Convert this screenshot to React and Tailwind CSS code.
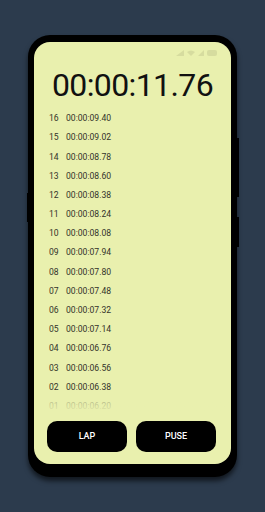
import React from 'react';

const laps = [
  ['16', '00:00:09.40'],
  ['15', '00:00:09.02'],
  ['14', '00:00:08.78'],
  ['13', '00:00:08.60'],
  ['12', '00:00:08.38'],
  ['11', '00:00:08.24'],
  ['10', '00:00:08.08'],
  ['09', '00:00:07.94'],
  ['08', '00:00:07.80'],
  ['07', '00:00:07.48'],
  ['06', '00:00:07.32'],
  ['05', '00:00:07.14'],
  ['04', '00:00:06.76'],
  ['03', '00:00:06.56'],
  ['02', '00:00:06.38'],
  ['01', '00:00:06.20'],
];

// status icons, very faint like in the shot
const StatusIcons = () => (
  <div className="flex items-center gap-[3px] opacity-40">
    <svg width="8" height="6" viewBox="0 0 8 6">
      <path d="M0 6 L8 0 L8 6 Z" fill="#b9bf8a" />
    </svg>
    <svg width="8" height="6" viewBox="0 0 8 6">
      <path d="M0 2 Q4 -1 8 2 L4 6 Z" fill="#b9bf8a" />
    </svg>
    <svg width="6" height="6" viewBox="0 0 6 6">
      <path d="M0 6 L6 0 L6 6 Z" fill="#b9bf8a" />
    </svg>
    <div className="w-[10px] h-[6px] rounded-[2px] bg-[#b9bf8a]" />
  </div>
);

const App = () => {
  return (
    <div className="w-[265px] h-[512px] bg-[#2c3b4d] flex justify-center pt-[35px] font-['Roboto',sans-serif]">
      <div className="relative w-[209px] h-[442px] rounded-[22px] bg-black pt-[7px] px-[6px] pb-[13px] shadow-[0_4px_5px_rgba(0,0,0,0.6)]">
        {/* side buttons */}
        <div className="absolute left-[-1px] top-[158px] w-[2px] h-[29px] bg-black" />
        <div className="absolute right-[-2px] top-[103px] w-[2px] h-[59px] bg-black" />
        <div className="absolute right-[-2px] top-[182px] w-[2px] h-[30px] bg-black" />

        <div className="h-full rounded-[16px] bg-[#e9f0ae] flex flex-col overflow-hidden">
          <div className="h-[18px] flex justify-end items-end pr-[14px] pb-[4px]">
            <StatusIcons />
          </div>

          <div className="h-[49px] flex items-center justify-center">
            <span className="text-[32px] leading-none text-[#111] tracking-[-0.6px]">00:00:11.76</span>
          </div>

          <div className="relative flex-1 overflow-hidden">
            <div className="flex flex-col pl-[15px]">
              {laps.map(([n, t]) => (
                <div key={n} className="h-[19.2px] flex items-center gap-[6px] text-[8.6px] text-[#33332a]">
                  <span className="w-[11px]">{n}</span>
                  <span>{t}</span>
                </div>
              ))}
            </div>
            <div className="absolute left-0 right-0 bottom-0 h-[14px] bg-gradient-to-b from-[#e9f0aeaa] to-[#e9f0ae]" />
          </div>

          <div className="flex gap-[9px] pl-[13px] pr-[15px] pt-[8px] pb-[12px]">
            <button className="w-[80px] h-[31px] rounded-[10px] bg-black text-white text-[9px] font-medium">LAP</button>
            <button className="w-[80px] h-[31px] rounded-[10px] bg-black text-white text-[9px] font-medium">PUSE</button>
          </div>
        </div>
      </div>
    </div>
  );
};

export default App;
